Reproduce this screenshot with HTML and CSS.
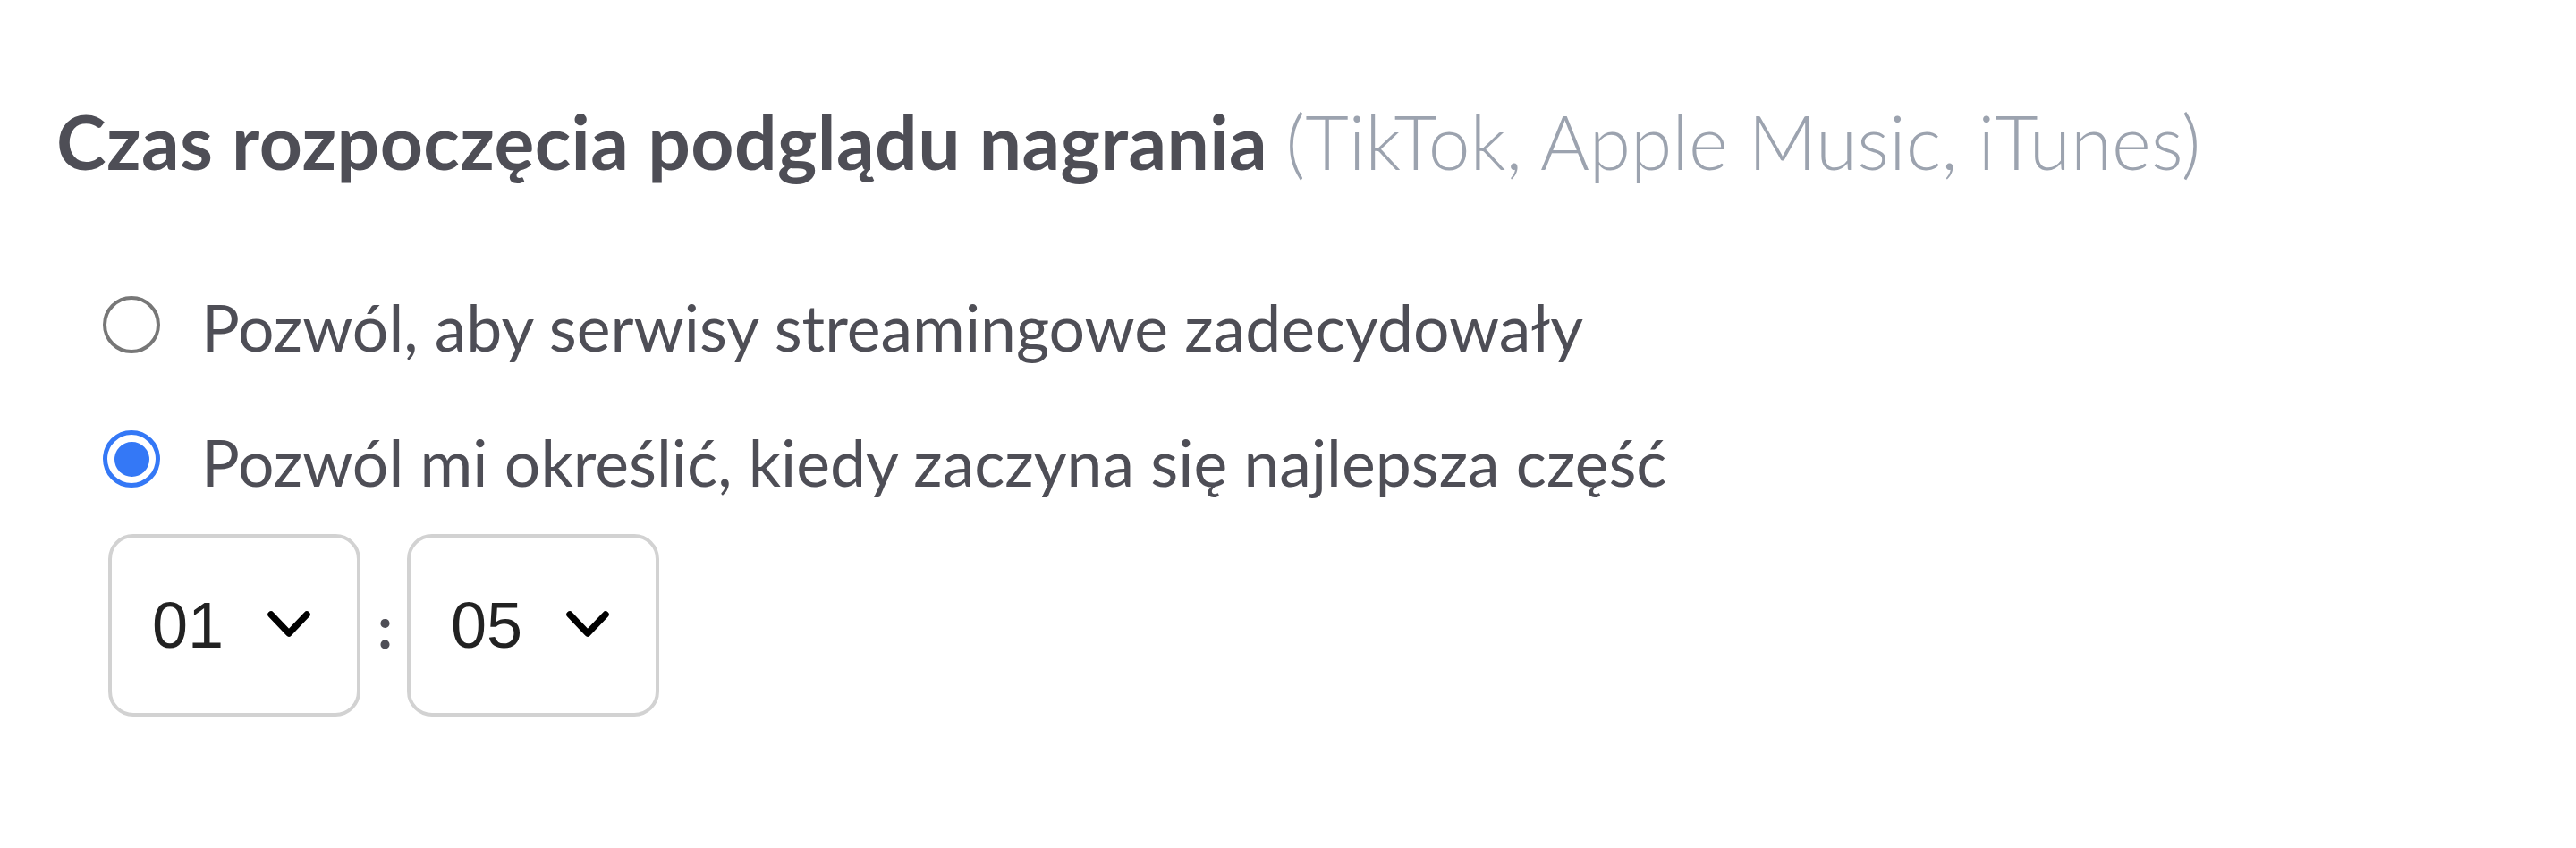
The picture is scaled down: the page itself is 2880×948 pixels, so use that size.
FILE: index.html
```html
<!DOCTYPE html>
<html lang="pl">
<head>
<meta charset="utf-8">
<title>Czas rozpoczęcia podglądu nagrania</title>
<link rel="stylesheet" href="styles.css">
</head>
<body>
<section class="preview-start">
  <h2 class="heading"><span class="heading-main">Czas rozpoczęcia podglądu nagrania</span> <span class="heading-note">(TikTok, Apple Music, iTunes)</span></h2>
  <div class="options">
    <label class="option">
      <span class="radio"></span>
      <span class="option-text">Pozwól, aby serwisy streamingowe zadecydowały</span>
    </label>
    <label class="option">
      <span class="radio radio-checked"></span>
      <span class="option-text">Pozwól mi określić, kiedy zaczyna się najlepsza część</span>
    </label>
    <div class="time">
      <div class="select">
        <span class="select-value">01</span>
        <svg class="chevron" width="50" height="30" viewBox="0 0 50 30"><path d="M5 5 L25 26 L45 5" fill="none" stroke="#000" stroke-width="7.5" stroke-linecap="round" stroke-linejoin="round"/></svg>
      </div>
      <span class="colon">:</span>
      <div class="select">
        <span class="select-value">05</span>
        <svg class="chevron" width="50" height="30" viewBox="0 0 50 30"><path d="M5 5 L25 26 L45 5" fill="none" stroke="#000" stroke-width="7.5" stroke-linecap="round" stroke-linejoin="round"/></svg>
      </div>
    </div>
  </div>
</section>
</body>
</html>
```
FILE: styles.css
```css
html, body {
  margin: 0;
  background: #ffffff;
}

.preview-start {
  padding: 108px 0 0 63px;
  font-family: Lato, "Noto Sans", sans-serif;
  color: #4e4e56;
}

.heading {
  margin: 0;
  font-size: 84px;
  line-height: 1.2;
  font-weight: 700;
  white-space: nowrap;
}

.heading-main {
  letter-spacing: 0.4px;
}

.heading-note {
  font-weight: 300;
  color: #9ca3af;
}

.options {
  display: flex;
  flex-direction: column;
  align-items: flex-start;
  padding: 114px 0 0 52px;
}

.option {
  display: flex;
  align-items: center;
  gap: 46px;
  font-size: 71.5px;
  line-height: 1.2;
  margin-bottom: 65px;
}

.option + .option {
  margin-bottom: 38px;
}

.radio {
  box-sizing: border-box;
  width: 64px;
  height: 64px;
  border-radius: 50%;
  border: 4px solid #777777;
  background: #fff;
  flex: none;
  margin-top: -6px;
  display: flex;
  align-items: center;
  justify-content: center;
}

.radio-checked {
  border: 5px solid #3478f6;
}

.radio-checked::after {
  content: "";
  width: 39px;
  height: 39px;
  border-radius: 50%;
  background: #3478f6;
}

.time {
  display: flex;
  align-items: center;
  gap: 19px;
  margin-left: 6px;
}

.select {
  box-sizing: border-box;
  width: 282px;
  height: 204px;
  border: 4px solid #d2d2d2;
  border-radius: 28px;
  display: flex;
  align-items: center;
  padding-left: 45px;
  gap: 48px;
}

.select-value {
  font-family: "Liberation Sans", Arial, sans-serif;
  font-size: 72px;
  color: #222222;
}

.chevron {
  display: block;
  margin-top: -4px;
}

.colon {
  font-size: 66px;
  font-weight: 700;
  color: #4e4e56;
  width: 14px;
  text-align: center;
}
```
